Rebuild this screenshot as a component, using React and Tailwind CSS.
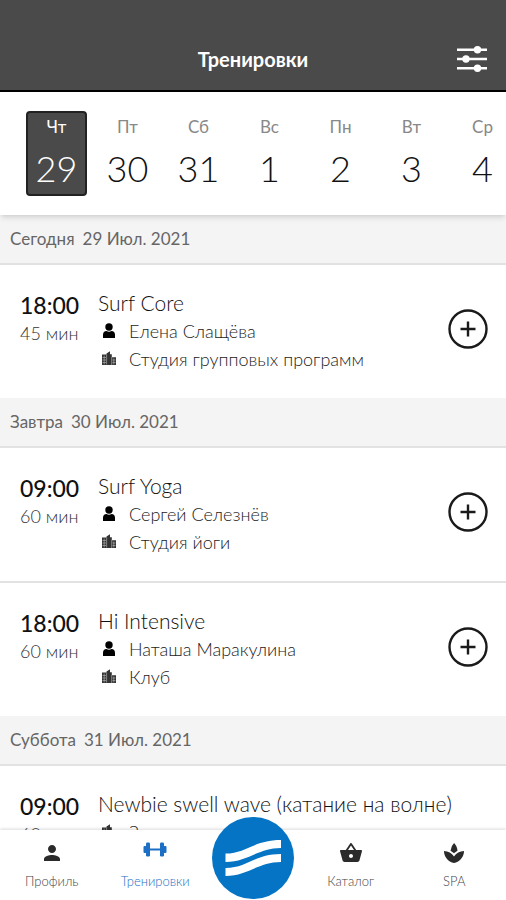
import React, { useState } from 'react';
import { MdPerson, MdShoppingBasket, MdSpa } from 'react-icons/md';

const days = [
  { name: 'Чт', date: 29 },
  { name: 'Пт', date: 30 },
  { name: 'Сб', date: 31 },
  { name: 'Вс', date: 1 },
  { name: 'Пн', date: 2 },
  { name: 'Вт', date: 3 },
  { name: 'Ср', date: 4 },
];

const schedule = [
  {
    title: 'Сегодня',
    date: '29 Июл. 2021',
    items: [
      { time: '18:00', duration: '45 мин', name: 'Surf Core', trainer: 'Елена Слащёва', place: 'Студия групповых программ' },
    ],
  },
  {
    title: 'Завтра',
    date: '30 Июл. 2021',
    items: [
      { time: '09:00', duration: '60 мин', name: 'Surf Yoga', trainer: 'Сергей Селезнёв', place: 'Студия йоги' },
      { time: '18:00', duration: '60 мин', name: 'Hi Intensive', trainer: 'Наташа Маракулина', place: 'Клуб' },
    ],
  },
  {
    title: 'Суббота',
    date: '31 Июл. 2021',
    items: [
      { time: '09:00', duration: '60 мин', name: 'Newbie swell wave (катание на волне)', place: 'Зона волны' },
    ],
  },
];

const FilterIcon = () => (
  <svg viewBox="0 0 32 28" className="h-7 w-8" fill="#fff" aria-hidden="true">
    <path d="M1 3.5h30v2.6H1zM1 12.7h30v2.6H1zM1 21.9h30v2.6H1z" />
    <circle cx="21.5" cy="4.8" r="3.7" />
    <circle cx="10" cy="14" r="3.7" />
    <circle cx="21.5" cy="23.2" r="3.7" />
  </svg>
);

const TrainerIcon = () => (
  <svg viewBox="0 0 14 16" className="h-4 w-3.5" fill="#000" aria-hidden="true">
    <circle cx="7" cy="4" r="3.7" />
    <path d="M1 15v-3.2c0-2.4 1.3-3.6 3.5-3.8 1.5 1 3.5 1 5 0 2.2.2 3.5 1.4 3.5 3.8V15z" />
  </svg>
);

const BuildingIcon = () => (
  <svg viewBox="0 0 16 16" className="h-4 w-4" aria-hidden="true">
    <path d="M1 3.5h4.500V2.500L9 .3v3h1.800v3H15V14H1z" fill="#333" />
    <path d="M3.2 4.500v9M5.600 3.500v10M10.700 6v8M12.800 7.500v6M1.500 6.500h3.500M1.500 9h3.500M1.500 11.500h3.500M11.500 9h3M11.500 11.500h3" stroke="#aaa" strokeWidth="0.7" fill="none" />
  </svg>
);

const DumbbellIcon = () => (
  <svg viewBox="0 0 24 24" className="h-6 w-6" fill="#1c6fc4" aria-hidden="true">
    <rect x="0.5" y="5" width="3" height="7" rx="1" />
    <rect x="3" y="1.5" width="4" height="14" rx="1.2" />
    <rect x="7" y="7.5" width="10" height="2" />
    <rect x="17" y="1.5" width="4" height="14" rx="1.2" />
    <rect x="20.5" y="5" width="3" height="7" rx="1" />
  </svg>
);

const WaveLogo = () => (
  <svg viewBox="0 0 82 82" className="h-full w-full" aria-hidden="true">
    <circle cx="41" cy="41" r="41" fill="#0574c4" />
    <path d="M13.5 36.5C34 36.5 42 23 69 23v8C46 31 36 45 13.5 45z" fill="#fff" />
    <path d="M13.5 51C36 51 42 37 69 37v8C46 45 36 59 13.5 59z" fill="#fff" />
  </svg>
);

const TrainingRow = ({ item }) => (
  <li className="flex items-start border-b-2 border-[#e2e2e2] pt-6 pb-[25px] pl-5 pr-[18px] last:border-b-0">
    <div className="w-[78px] shrink-0">
      <div className="text-[23px] leading-8 font-medium text-[#111]">{item.time}</div>
      <div className="text-[18px] leading-6 font-light text-[#333]">{item.duration}</div>
    </div>
    <div className="min-w-0 flex-1">
      <h3 className="truncate text-[21px] leading-7 font-light text-[#111]">{item.name}</h3>
      {item.trainer && (
        <div className="flex items-center gap-3 pl-[3px] text-[18px] leading-7 font-light text-[#222]">
          <span className="flex w-4 justify-center"><TrainerIcon /></span>
          {item.trainer}
        </div>
      )}
      <div className="flex items-center gap-3 pl-[3px] text-[18px] leading-7 font-light text-[#222]">
        <BuildingIcon />
        {item.place}
      </div>
    </div>
    {item.trainer && (
      <button type="button" aria-label="Записаться" className="mt-5 h-10 w-10 shrink-0">
        <svg viewBox="0 0 40 40" fill="none" stroke="#1a1a1a" aria-hidden="true">
          <circle cx="20" cy="20" r="18.5" strokeWidth="2.4" />
          <path d="M20 12.5v15M12.5 20h15" strokeWidth="2.4" />
        </svg>
      </button>
    )}
  </li>
);

const NavItem = ({ label, icon, active }) => (
  <a href="#" className="flex flex-1 flex-col items-center pt-[11px]">
    <span className="flex h-6 items-center text-[#2b2b2b]">{icon}</span>
    <span className={`mt-2 text-[13px] leading-4 font-light ${active ? 'text-[#1c6fc4]' : 'text-[#444]'}`}>{label}</span>
  </a>
);

const App = () => {
  const [selected, setSelected] = useState(29);

  return (
    <div className="flex h-screen flex-col bg-white font-['Lato','Open_Sans',sans-serif]">
      <header className="grid shrink-0 grid-cols-[1fr_auto_1fr] items-center border-b-2 border-black bg-[#4a4a4a] px-[18px] pt-11 pb-4">
        <h1 className="col-start-2 text-[20px] leading-[30px] font-bold text-white">Тренировки</h1>
        <button type="button" aria-label="Фильтр" className="justify-self-end">
          <FilterIcon />
        </button>
      </header>

      <div className="relative z-10 flex shrink-0 gap-[10px] overflow-x-auto bg-white py-[19px] pl-[26px] shadow-md [scrollbar-width:none]">
        {days.map((day) => (
          <button
            key={day.date}
            type="button"
            onClick={() => setSelected(day.date)}
            className={`flex h-[85px] w-[61px] shrink-0 flex-col items-center rounded border-2 pt-1 ${
              selected === day.date ? 'border-[#222] bg-[#4a4a4a] text-white' : 'border-transparent text-[#111]'
            }`}
          >
            <span className={`text-[17px] leading-5 ${selected === day.date ? 'text-white' : 'text-[#888]'}`}>{day.name}</span>
            <span className="mt-2 text-[36px] leading-[46px] font-light">{day.date}</span>
          </button>
        ))}
      </div>

      <main className="min-h-0 flex-1 overflow-y-auto [scrollbar-width:none]">
        {schedule.map((group) => (
          <section key={group.date}>
            <h2 className="flex h-[50px] items-center gap-2 border-b-2 border-[#e2e2e2] bg-[#f4f4f4] px-[10px] text-[17px] text-[#666]">
              <span>{group.title}</span>
              <span>{group.date}</span>
            </h2>
            <ul>
              {group.items.map((item) => (
                <TrainingRow key={item.name} item={item} />
              ))}
            </ul>
          </section>
        ))}
      </main>

      <nav className="relative z-10 flex h-[70px] shrink-0 bg-white shadow-[0_-1px_3px_rgba(0,0,0,0.15)]">
        <NavItem label="Профиль" icon={<MdPerson size={24} />} />
        <NavItem label="Тренировки" icon={<DumbbellIcon />} active />
        <a href="#" aria-label="Главная" className="mx-[5px] -mt-[13px] h-[82px] w-[82px] shrink-0">
          <WaveLogo />
        </a>
        <NavItem label="Каталог" icon={<MdShoppingBasket size={24} />} />
        <NavItem label="SPA" icon={<MdSpa size={24} />} />
      </nav>
    </div>
  );
};

export default App;
